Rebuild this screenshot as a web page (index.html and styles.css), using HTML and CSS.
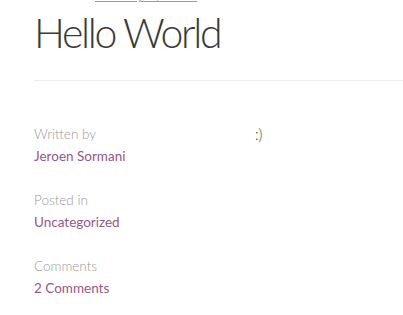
FILE: index.html
```html
<!DOCTYPE html>
<html lang="en">
<head>
  <meta charset="UTF-8" />
  <meta name="viewport" content="width=device-width, initial-scale=1.0">
  <title>Hello World</title>
  <link rel="stylesheet" href="styles.css">
</head>
<body>
  <article class="post">
    <header class="post-header">
      <div class="post-date"><a href="#">January 1, 2015</a></div>
      <h1 class="post-title">Hello World</h1>
    </header>

    <div class="post-body">
      <aside class="post-meta">
        <div class="meta-item">
          <span class="meta-label">Written by</span>
          <a class="meta-link" href="#">Jeroen Sormani</a>
        </div>
        <div class="meta-item">
          <span class="meta-label">Posted in</span>
          <a class="meta-link" href="#">Uncategorized</a>
        </div>
        <div class="meta-item">
          <span class="meta-label">Comments</span>
          <a class="meta-link" href="#">2 Comments</a>
        </div>
      </aside>

      <div class="post-content">
        <p>:)</p>
      </div>
    </div>
  </article>
</body>
</html>
```

FILE: styles.css
```css
:root {
  --text: #3a3a3a;
  --muted: #999;
  --link: #96588a;
  --line: #ececec;
}

body {
  font-family: Lato, 'Liberation Sans', sans-serif;
  margin: 0;
  padding: 0;
  background: #fff;
  color: var(--text);
  overflow: hidden;
}

.post {
  padding-left: 34px;
}

.post-header {
  border-bottom: 1px solid var(--line);
  padding-bottom: 22px;
}

.post-date {
  display: flex;
  height: 3px;
  overflow: hidden;
  padding-left: 61px;
}

.post-date a {
  margin-top: -14px;
  font-size: 14.6px;
  line-height: 16px;
  color: #999;
  text-decoration: underline;
  text-underline-offset: 2px;
}

.post-title {
  font-size: 41px;
  font-weight: 300;
  line-height: 50px;
  margin: 5px 0 0;
  letter-spacing: -2.3px;
}

.post-body {
  display: grid;
  grid-template-columns: 221px 1fr;
  padding-top: 42px;
}

.meta-item {
  display: flex;
  flex-direction: column;
  margin-bottom: 22px;
}

.meta-label {
  font-size: 13.5px;
  line-height: 22px;
  color: var(--muted);
  font-weight: 300;
}

.meta-link {
  font-size: 13.5px;
  line-height: 22px;
  color: var(--link);
  text-decoration: none;
}

.post-content p {
  margin: 0;
  font-size: 15px;
  line-height: 22px;
  font-weight: 300;
}
```
